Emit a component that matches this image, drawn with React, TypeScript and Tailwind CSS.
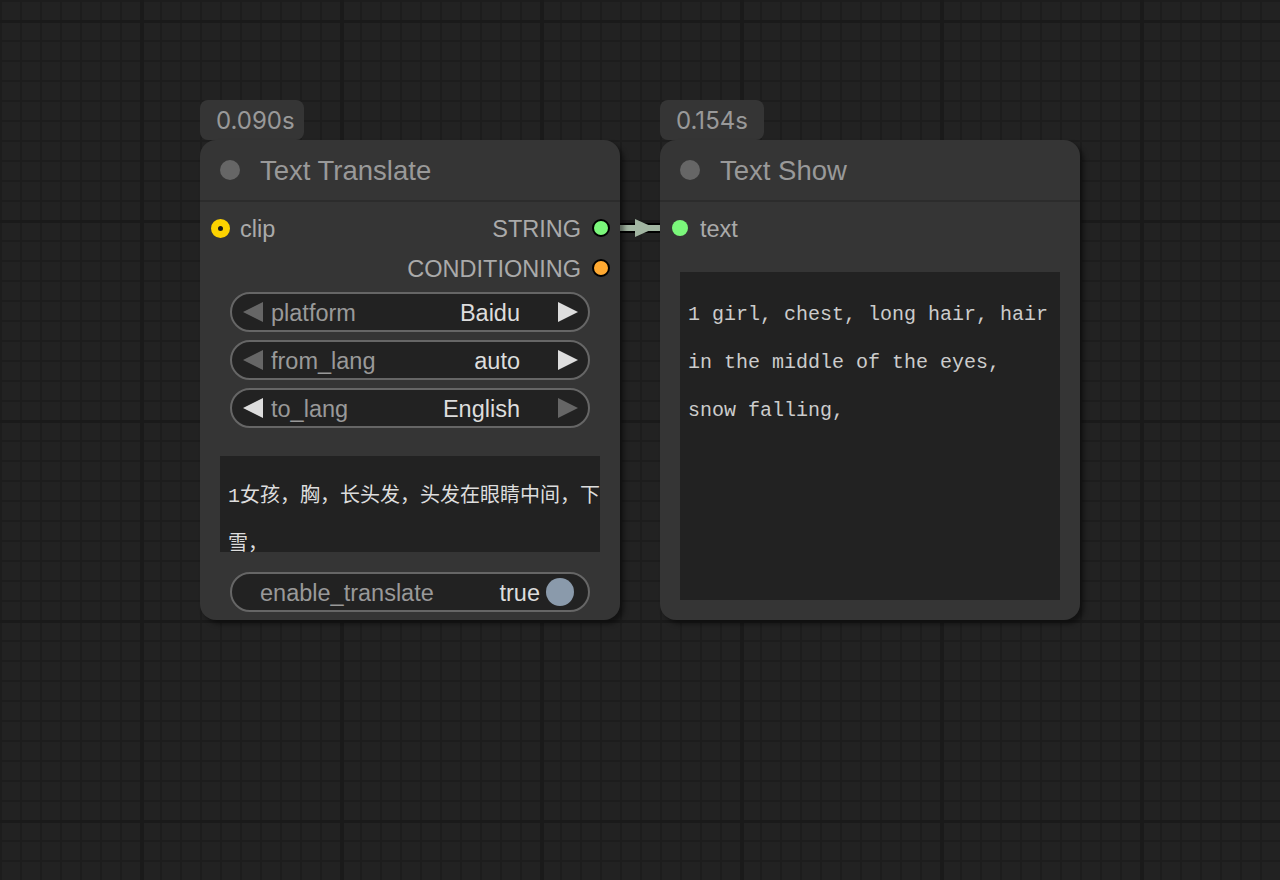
import React from "react";

// canvas grid: minor lines every 20px, major every 200px
const canvasBg =
  "bg-[#222222] bg-[linear-gradient(to_right,#1a1a1a_0_4px,transparent_4px),linear-gradient(to_bottom,#1a1a1a_0_3px,transparent_3px),linear-gradient(to_right,#1d1d1d_0_2px,transparent_2px),linear-gradient(to_bottom,#1d1d1d_0_2px,transparent_2px)] bg-[size:200px_200px,200px_200px,20px_20px,20px_20px] bg-[position:140px_0,0_20px,0_0,0_0]";

function Arrow({ dir, on }: { dir: "left" | "right"; on: boolean }) {
  return (
    <svg width="20" height="20" viewBox="0 0 20 20" className="shrink-0">
      <polygon
        points={dir === "left" ? "0,10 20,0 20,20" : "20,10 0,0 0,20"}
        fill={on ? "#dddddd" : "#666666"}
      />
    </svg>
  );
}

function ComboWidget({
  label,
  value,
  leftOn,
  rightOn,
}: {
  label: string;
  value: string;
  leftOn: boolean;
  rightOn: boolean;
}) {
  return (
    <div className="mx-[30px] flex h-10 items-center rounded-full border-2 border-[#666666] bg-[#222222] pl-[11px] pr-[10px] text-[23.5px]">
      <Arrow dir="left" on={leftOn} />
      <span className="ml-2 flex-1 pt-[3px] text-[#999999]">{label}</span>
      <span className="mr-[38px] pt-[3px] text-[#dddddd]">{value}</span>
      <Arrow dir="right" on={rightOn} />
    </div>
  );
}

function Badge({ time }: { time: string }) {
  return (
    <div className="flex h-10 w-[104px] items-center rounded-lg bg-[#353535] pl-4 pt-[1px] font-['Inter','Liberation_Sans',sans-serif] text-[24px] text-[#999999]">
      {time}
    </div>
  );
}

function Title({ name }: { name: string }) {
  return (
    <>
      <div className="flex h-[60px] items-center gap-5 px-5">
        <span className="h-5 w-5 rounded-full bg-[#666666]" />
        <span className="pt-[2px] text-[27.5px] text-[#999999]">{name}</span>
      </div>
      <div className="h-[2px] bg-[#2c2c2c]" />
    </>
  );
}

export default function App() {
  return (
    <div className={`relative h-[880px] w-full overflow-hidden ${canvasBg} font-['Liberation_Sans',Arial,sans-serif]`}>
      {/* link STRING -> text */}
      <svg className="absolute left-0 top-0" width="1280" height="880">
        <line x1="601" y1="228" x2="680" y2="228" stroke="#000000" strokeWidth="10" />
        <line x1="601" y1="228" x2="680" y2="228" stroke="#a1b5a1" strokeWidth="6" />
        <polygon points="635,219 655,228 635,237" fill="#a1b5a1" />
      </svg>

      {/* Text Translate node */}
      <div className="absolute left-[200px] top-[100px] w-[420px]">
        <Badge time="0.090s" />
        <div className="rounded-2xl bg-[#353535] pb-2 shadow-[4px_4px_5px_rgba(0,0,0,0.45)]">
          <Title name="Text Translate" />
          <div className="pt-[6px] text-[23.5px]">
            <div className="flex h-10 items-center pl-[11px] pr-[10px]">
              <span className="h-[19px] w-[19px] rounded-full border-[7px] border-[#fdd300] bg-[#1a1a1a]" />
              <span className="ml-[10px] flex-1 pt-[3px] text-[#aaaaaa]">clip</span>
              <span className="pt-[3px] text-[#aaaaaa]">STRING</span>
              <span className="ml-[11px] h-[18px] w-[18px] rounded-full border-2 border-black bg-[#7bf77b]" />
            </div>
            <div className="flex h-10 items-center justify-end pr-[10px]">
              <span className="pt-[3px] text-[#aaaaaa]">CONDITIONING</span>
              <span className="ml-[11px] h-[18px] w-[18px] rounded-full border-2 border-black bg-[#ffa931]" />
            </div>
            <div className="mt-1 flex flex-col gap-2">
              <ComboWidget label="platform" value="Baidu" leftOn={false} rightOn={true} />
              <ComboWidget label="from_lang" value="auto" leftOn={false} rightOn={true} />
              <ComboWidget label="to_lang" value="English" leftOn={true} rightOn={false} />
            </div>
            <div className="mx-5 mt-[28px] h-[96px] whitespace-pre bg-[#222222] px-2 pt-[17px] font-['Liberation_Mono','Noto_Sans_CJK_SC',monospace] text-[20px] leading-[48px] text-[#dddddd]">
              <div>1女孩，胸，长头发，头发在眼睛中间，下</div>
              <div>雪，</div>
            </div>
            <div className="mx-[30px] mt-5 flex h-10 items-center rounded-full border-2 border-[#666666] bg-[#222222] pl-[28px] pr-[14px]">
              <span className="flex-1 pt-[3px] text-[#999999]">enable_translate</span>
              <span className="pt-[3px] text-[#dddddd]">true</span>
              <span className="ml-[6px] h-7 w-7 rounded-full bg-[#8a9aab]" />
            </div>
          </div>
        </div>
      </div>

      {/* Text Show node */}
      <div className="absolute left-[660px] top-[100px] w-[420px]">
        <Badge time="0.154s" />
        <div className="rounded-2xl bg-[#353535] pb-5 shadow-[4px_4px_5px_rgba(0,0,0,0.45)]">
          <Title name="Text Show" />
          <div className="pt-[6px] text-[23.5px]">
            <div className="flex h-10 items-center pl-3">
              <span className="h-4 w-4 rounded-full bg-[#7bf77b]" />
              <span className="ml-3 pt-[3px] text-[#aaaaaa]">text</span>
            </div>
            <div className="mx-5 mt-6 h-[328px] whitespace-pre bg-[#222222] px-2 pt-[19px] font-['Liberation_Mono','Courier_New',monospace] text-[20px] leading-[48px] text-[#cccccc]">
              <div>1 girl, chest, long hair, hair</div>
              <div>in the middle of the eyes,</div>
              <div>snow falling,</div>
            </div>
          </div>
        </div>
      </div>
    </div>
  );
}
